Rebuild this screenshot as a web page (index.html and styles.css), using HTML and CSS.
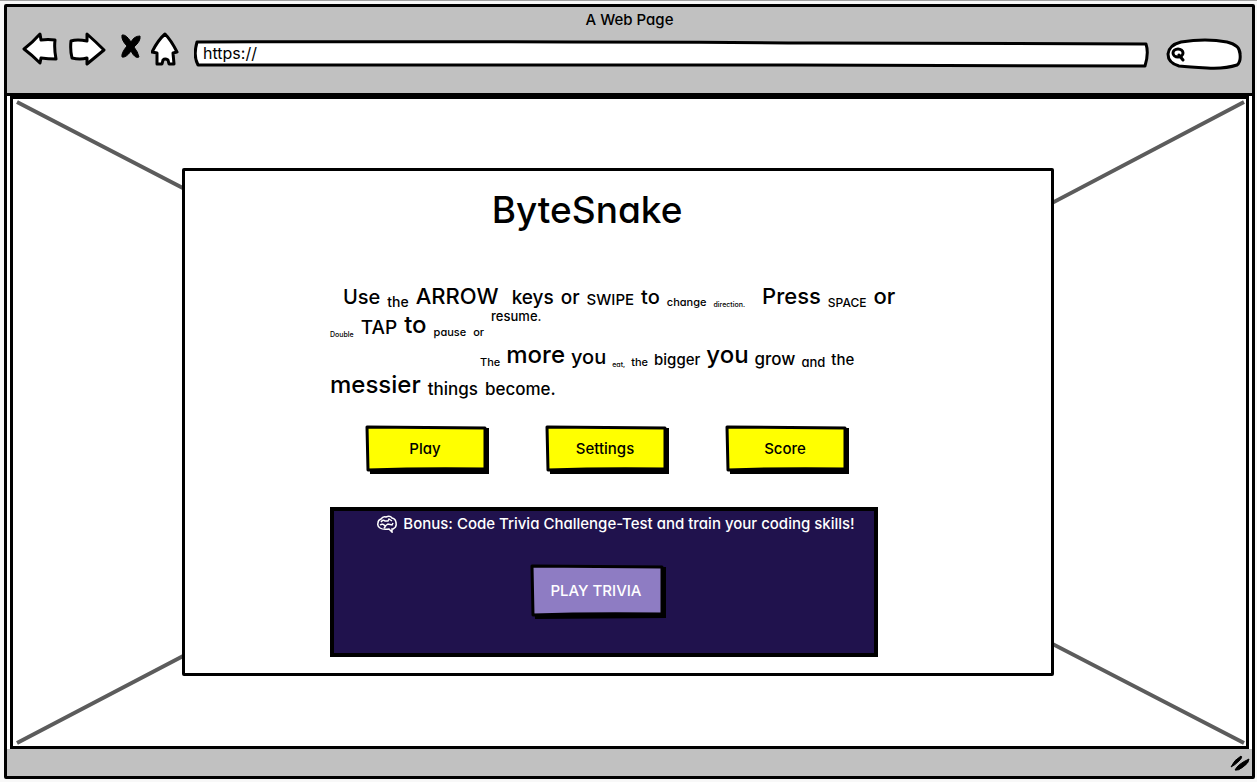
FILE: index.html
```html
<!DOCTYPE html>
<html lang="en">
<head>
<meta charset="utf-8">
<title>ByteSnake</title>
<link rel="stylesheet" href="styles.css">
</head>
<body>
<div class="browser">
  <header class="chrome">
    <div class="tab-title">A Web Page</div>
    <div class="toolbar">
      <nav class="nav">
        <button class="icon-btn" aria-label="Back"><svg width="36" height="34" viewBox="0 0 36 34"><path d="M2 17Q10 11 18 2l1 6q7-1 14 0-1 9 1 19-8 0-15-1l-1 5Q10 23 2 17Z"/></svg></button>
        <button class="icon-btn" aria-label="Forward"><svg width="38" height="34" viewBox="0 0 38 34"><path d="M3 9q6-2 16 0V2Q28 10 36 18L19 32v-6q-7 2-15 0Q2 18 3 9Z"/></svg></button>
        <button class="icon-btn stop" aria-label="Stop"><svg width="20" height="26" viewBox="0 0 20 26"><path class="solid" d="M1 1q4-1 9 7 3-6 9-6 1 5-6 11 4 5 5 10-4 2-8-6-5 7-9 6-1-4 5-11Q0 6 1 1Z"/></svg></button>
        <button class="icon-btn" aria-label="Home"><svg width="28" height="34" viewBox="0 0 28 34"><path d="M14 2Q20 8 26 20l-4 1 1 11-5 0-1-4q-3-2-5 0l-1 4-5 0 0-11-5-1Q7 8 14 2Z"/></svg></button>
      </nav>
      <div class="address">
        <svg class="sketch" viewBox="0 0 954 28" preserveAspectRatio="none" aria-hidden="true"><path d="M3 2Q300 1 620 3L951 4q3 9-1 22L600 25Q200 26 4 25-1 16 3 2Z"/></svg>
        <input class="address-input" aria-label="Address" value="https://">
      </div>
      <div class="search">
        <svg class="sketch" viewBox="0 0 76 32" preserveAspectRatio="none" aria-hidden="true"><path d="M15 4Q40 0 61 4q13 3 13 12 1 8-3 11-12 4-30 3Q23 29 13 28 2 25 2 16 3 7 15 4Z"/></svg>
        <svg class="lens" width="14" height="16" viewBox="0 0 14 16" aria-hidden="true"><ellipse cx="7" cy="6" rx="5" ry="4"/><path d="m8 8 4 5"/></svg>
        <input class="search-input" aria-label="Search">
      </div>
    </div>
  </header>

  <main class="viewport">
    <svg class="room" viewBox="0 0 1234 648" preserveAspectRatio="none" aria-hidden="true">
      <path d="M4 3 210 110M4 645 210 537M1232 3 1004 123M1232 645 1004 527"/>
    </svg>
    <section class="panel">
      <h1 class="title">ByteSnake</h1>
      <div class="copy">
        <p class="line first"><span class="s20">Use</span> <span class="s14">the</span> <span class="s22 wide">ARROW</span> <span class="s19">keys</span> <span class="s19">or</span> <span class="s15">SWIPE</span> <span class="s20">to</span> <span class="s11">change</span> <span class="s7 wider">direction.</span> <span class="s22">Press</span> <span class="s12">SPACE</span> <span class="s22">or</span></p>
        <p class="line"><span class="s7">Double</span> <span class="s19">TAP</span> <span class="s24">to</span> <span class="s11">pause</span> <span class="s11">or</span> <span class="s13 raised">resume.</span></p>
        <p class="line third"><span class="s11">The</span> <span class="s24">more</span> <span class="s20">you</span> <span class="s7">eat,</span> <span class="s11">the</span> <span class="s15">bigger</span> <span class="s24">you</span> <span class="s17">grow</span> <span class="s13">and</span> <span class="s15">the</span></p>
        <p class="line"><span class="s24">messier</span> <span class="s17">things</span> <span class="s17">become.</span></p>
      </div>
      <div class="actions">
        <button class="btn"><svg class="sketch" viewBox="0 0 124 49" preserveAspectRatio="none" aria-hidden="true"><path class="shade" d="M4 4 124 3V49L5 49Z"/><path class="face" d="M2 2 120 3V44Q60 43 3 45Z"/></svg><span>Play</span></button>
        <button class="btn"><svg class="sketch" viewBox="0 0 124 49" preserveAspectRatio="none" aria-hidden="true"><path class="shade" d="M4 4 124 3V49L5 49Z"/><path class="face" d="M2 2 120 3V44Q60 43 3 45Z"/></svg><span>Settings</span></button>
        <button class="btn"><svg class="sketch" viewBox="0 0 124 49" preserveAspectRatio="none" aria-hidden="true"><path class="shade" d="M4 4 124 3V49L5 49Z"/><path class="face" d="M2 2 120 3V44Q60 43 3 45Z"/></svg><span>Score</span></button>
      </div>
      <section class="bonus">
        <h2 class="bonus-title">
          <svg class="brain" width="20" height="18" viewBox="0 0 20 18" aria-hidden="true"><path d="M3 13Q0 11 1 8 1 5 4 4 6 1 9 2q4-2 6 1 4 1 4 5 1 4-3 6l-1 0 0 3-3-3Q6 15 3 13ZM4 7q2-3 4-1l3 0 1-2 3 2M3 10q3-2 5 1l3-2 4 1 1-2M7 13l2-2"/></svg>
          <span>Bonus: Code Trivia Challenge-Test and train your coding skills!</span>
        </h2>
        <button class="btn trivia"><svg class="sketch" viewBox="0 0 136 55" preserveAspectRatio="none" aria-hidden="true"><path class="shade" d="M4 4 136 3V54L5 55Z"/><path class="face" d="M2 2 132 3V50Q60 49 3 51Z"/></svg><span>PLAY TRIVIA</span></button>
      </section>
    </section>
  </main>

  <footer class="status">
    <svg width="20" height="16" viewBox="0 0 20 16" aria-hidden="true"><path class="solid" d="M1 12Q4 5 11 1q2 1-2 5T1 12ZM5 15q3-6 14-11 0 4-6 8-5 4-8 3Z"/></svg>
  </footer>
</div>
</body>
</html>
```
FILE: styles.css
```css
* { box-sizing: border-box; }

body {
  margin: 0;
  min-height: 100vh;
  padding: 3px 2px 3px 4px;
  display: flex;
  background: #f8f8f8;
  border-top: 1px solid #a0a0a0;
  font-family: Inter, "Open Sans", sans-serif;
  font-feature-settings: "cv11";
  color: #000;
}

button, input { font: inherit; color: inherit; font-feature-settings: inherit; }
button { border: 0; padding: 0; background: none; cursor: pointer; }
h1, h2, p { margin: 0; font-weight: 500; }

.browser {
  flex: 1;
  min-width: 0;
  display: flex;
  flex-direction: column;
  border: 3px solid #000;
  border-radius: 2px;
  background: #fff;
}

.chrome {
  height: 89px;
  background: #c1c1c1;
  border-bottom: 3px solid #000;
}

.tab-title {
  padding-top: 3px;
  text-align: center;
  font-size: 15px;
  font-weight: 500;
  line-height: 20px;
}

.toolbar {
  display: flex;
  align-items: center;
  padding: 2px 10px 0 15px;
}

.nav { display: flex; align-items: center; gap: 10px; margin: -4px 15px 0 0; }
.icon-btn { display: flex; }
.stop { margin: 0 0 4px 5px; }
.icon-btn path { fill: #fff; stroke: #000; stroke-width: 3; stroke-linejoin: round; }
.icon-btn .solid, .solid { fill: #000; stroke: #000; stroke-width: 1; }

.address, .search, .btn { position: relative; }
.sketch {
  position: absolute;
  inset: 0;
  width: 100%;
  height: 100%;
  fill: #fff;
  stroke: #000;
  stroke-width: 3;
  stroke-linejoin: round;
}

.address { flex: 1; height: 28px; margin-top: 6px; }
.search { width: 76px; height: 32px; margin: 6px 0 0 17px; }

.address-input, .search-input {
  position: relative;
  display: block;
  width: 100%;
  height: 100%;
  border: 0;
  outline: 0;
  background: none;
  font-size: 16px;
}
.address-input { padding: 0 9px 2px; }
.search-input { padding: 0 10px 0 22px; }
.lens {
  position: absolute;
  left: 5px;
  top: 9px;
  fill: none;
  stroke: #000;
  stroke-width: 3;
  stroke-linecap: round;
}

.viewport {
  position: relative;
  flex: 1;
  display: flex;
  margin: 0 3px;
  padding: 69px 192px 70px 169px;
  border: 3px solid #000;
}
.room { position: absolute; inset: 0; width: 100%; height: 100%; }
.room path { stroke: #5c5c5c; stroke-width: 4; fill: none; }

.panel {
  position: relative;
  flex: 1;
  min-width: 0;
  padding: 15px 173px 12px 145px;
  background: #fff;
  border: 3px solid #000;
  border-radius: 2px;
}

.title {
  padding-right: 34px;
  text-align: center;
  font-size: 37px;
  line-height: 48px;
}

.copy { margin: 46px -24px 0 0; }
.line {
  display: flex;
  align-items: flex-end;
  gap: 7px;
  height: 30px;
  line-height: 1.25;
  white-space: nowrap;
}
.first { padding-left: 13px; }
.third { padding-left: 150px; gap: 6px; }
.wide { margin-right: 6px; }
.wider { margin-right: 10px; }
.raised { align-self: flex-start; line-height: 1; }

.s7 { font-size: 7px; }
.s11 { font-size: 11px; }
.s12 { font-size: 12px; }
.s13 { font-size: 13px; }
.s14 { font-size: 14px; }
.s15 { font-size: 15px; }
.s17 { font-size: 17px; }
.s19 { font-size: 19px; }
.s20 { font-size: 20px; }
.s22 { font-size: 22px; }
.s24 { font-size: 24px; }

.actions {
  display: flex;
  justify-content: space-between;
  padding: 0 29px 0 35px;
  margin-top: 25px;
}
.btn {
  width: 124px;
  height: 49px;
  padding: 0 4px 2px 0;
  font-size: 15px;
  font-weight: 500;
}
.btn span { position: relative; }
.face { fill: #ff0; }
.shade { fill: #000; stroke: none; }

.bonus {
  display: flex;
  flex-direction: column;
  align-items: center;
  height: 150px;
  margin-top: 33px;
  border: 4px solid #000;
  background: #20124d;
  color: #fff;
}
.bonus-title {
  display: flex;
  align-items: center;
  gap: 6px;
  padding-left: 24px;
  font-size: 15px;
  line-height: 25px;
  white-space: nowrap;
}
.brain { fill: none; stroke: #fff; stroke-width: 1.5; }
.trivia {
  width: 136px;
  height: 55px;
  margin: 28px 12px 0 0;
}
.trivia .face { fill: #8e7cc3; }

.status {
  display: flex;
  justify-content: flex-end;
  align-items: center;
  height: 27px;
  padding-right: 2px;
  background: #c1c1c1;
}
```
